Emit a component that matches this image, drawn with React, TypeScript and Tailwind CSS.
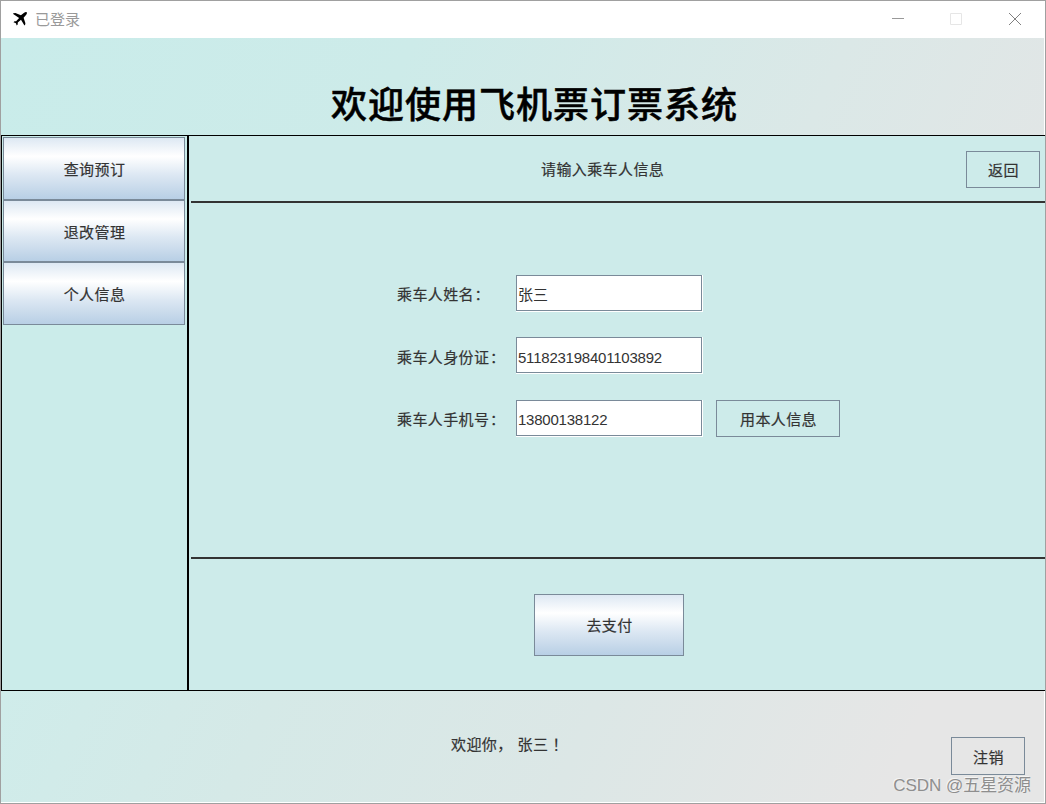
import React from "react";

const menuItems = [
  { label: "查询预订", className: "h-[63px] pt-[2px]" },
  { label: "退改管理", className: "h-[62px] pt-[3px]" },
  { label: "个人信息", className: "h-[63px] pt-[2px]" },
];

const fields = [
  { label: "乘车人姓名", value: "张三", height: "h-[62px]", pad: "pt-[9px]" },
  { label: "乘车人身份证", value: "511823198401103892", height: "h-[63px]", pad: "pt-[10px]" },
  { label: "乘车人手机号", value: "13800138122", height: "h-[37px]", pad: "pt-[9px]" },
];

function TitleBar() {
  return (
    <header className="flex h-[37px] shrink-0 items-center bg-white pl-3">
      <svg className="-mt-0.5" width="14" height="14" viewBox="0 0 14 14" fill="#000000">
        <path d="M.2 1.3L2.4.9 7.9 3.3 10.8.9Q13 -.5 13.7.3T13 3L10.6 5.8 12.4 11.2 12 13.3H11.3L8 7.8 4.8 10.6 4.7 12.4 3.7 13.6 2.9 11.2.5 10.3 1.5 9.3 3.1 9.2 6.1 5.9.2 2Z" />
      </svg>
      <span className="ml-2 text-[15px] leading-none tracking-normal text-[#999999]">已登录</span>
      <div className="mr-6 ml-auto flex items-center gap-[46px]">
        <svg className="-ml-px mr-px" width="12" height="12" viewBox="0 0 12 12" stroke="#999999">
          <path d="M0 4.5H12" />
        </svg>
        <svg className="-mt-0.5 -ml-px mr-px" width="12" height="12" viewBox="0 0 12 12" fill="none" stroke="#e6e6e6">
          <path d="M.5.5h11v11H.5z" />
        </svg>
        <svg className="-mt-0.5" width="12" height="12" viewBox="0 0 12 12" stroke="#808080">
          <path d="M0 0L12 12M12 0L0 12" />
        </svg>
      </div>
    </header>
  );
}

function MetalButton({ children, className }: { children: React.ReactNode; className: string }) {
  return (
    <button
      className={`flex items-center justify-center border border-[#7a8a99] bg-[linear-gradient(to_bottom,#dde8f3_0%,#ffffff_30%,#dde8f3_60%,#b8cfe5_100%)] pl-px ${className}`}
    >
      {children}
    </button>
  );
}

function OutlineButton({ children, className }: { children: React.ReactNode; className: string }) {
  return (
    <button className={`flex items-center justify-center border border-[#7a8a99] pl-px ${className}`}>
      {children}
    </button>
  );
}

function Sidebar() {
  return (
    <nav className="flex w-[188px] shrink-0 flex-col border-r-2 border-l border-black bg-[#cbecea] pt-px pr-[2px] pl-px">
      {menuItems.map((item) => (
        <MetalButton key={item.label} className={`w-[182px] ${item.className}`}>
          {item.label}
        </MetalButton>
      ))}
    </nav>
  );
}

function PassengerForm() {
  return (
    <div className="flex h-[354px] flex-col pt-[72px] pl-[206px]">
      {fields.map((field, i) => (
        <div key={field.label} className={`flex items-start ${field.height}`}>
          <label className={`w-[119px] ${field.pad}`}>
            {field.label}
            <span className="ml-[0.5px]">：</span>
          </label>
          <div className="border-r border-b border-white">
            <input
              className={`block h-9 w-[186px] border border-[#7a8a99] bg-white px-px text-[15px] text-[#333333] outline-none [-webkit-text-stroke:0px] ${i === 0 ? "tracking-normal" : i === 1 ? "pt-[4px] tracking-[-0.22px]" : "pt-[3px] tracking-[-0.22px]"}`}
              defaultValue={field.value}
            />
          </div>
          {i === 2 && <OutlineButton className="ml-[13px] h-[37px] w-[124px] pt-[2px]">用本人信息</OutlineButton>}
        </div>
      ))}
    </div>
  );
}

function App() {
  return (
    <div
      lang="zh-CN"
      className="flex h-[804px] w-[1046px] flex-col border border-[#a0a0a0] bg-white font-['Liberation_Sans','Noto_Sans_CJK_SC',sans-serif] text-[15px] leading-[22px] tracking-[0.4px] text-[#333333]"
    >
      <TitleBar />
      <div className="mr-px flex h-[97px] shrink-0 justify-center bg-[linear-gradient(115deg,#c9ecea_0%,#cdebe9_38%,#dbe8e7_78%,#e1e6e6_100%)] pt-[47px] pl-[24px]">
        <h1 className="text-[36px] leading-[42px] font-medium tracking-[1px] text-black [-webkit-text-stroke:0.5px_black]">
          欢迎使用飞机票订票系统
        </h1>
      </div>
      <div className="flex h-[556px] shrink-0 border-y border-black bg-[#cdebea] [-webkit-text-stroke:0.2px]">
        <Sidebar />
        <main className="ml-[2px] flex flex-1 flex-col">
          <div className="flex h-[67px] items-start border-b-2 border-[#333333]">
            <p className="ml-[350px] pt-[23px]">请输入乘车人信息</p>
            <OutlineButton className="mt-[15px] mr-[5px] ml-auto h-[37px] w-[74px] pt-[2px]">返回</OutlineButton>
          </div>
          <PassengerForm />
          <div className="flex flex-1 items-start border-t-2 border-[#333333] pt-[35px] pl-[343px]">
            <MetalButton className="h-[62px] w-[150px] pt-[2px] pl-[5px]">去支付</MetalButton>
          </div>
        </main>
      </div>
      <footer className="relative mr-px flex h-[111px] shrink-0 items-start bg-[linear-gradient(115deg,#cfecea_0%,#d5e9e7_25%,#dce7e6_55%,#e6e6e6_85%)]">
        <p className="ml-[450px] pt-[43px] whitespace-pre [-webkit-text-stroke:0.2px]">
          欢迎你，<span className="ml-[5px]">张三</span>
          <span className="ml-[4px]">！</span>
        </p>
        <OutlineButton className="mt-[46px] mr-[19px] ml-auto h-[38px] w-[74px] pt-[3px] [-webkit-text-stroke:0.2px]">
          注销
        </OutlineButton>
        <span className="absolute right-[13px] bottom-[5px] text-[17px] tracking-[-0.05px] text-[#8e8e8e] [text-shadow:-1px_-1px_0_#f4f4f4]">
          CSDN @五星资源
        </span>
      </footer>
    </div>
  );
}

export default App;
